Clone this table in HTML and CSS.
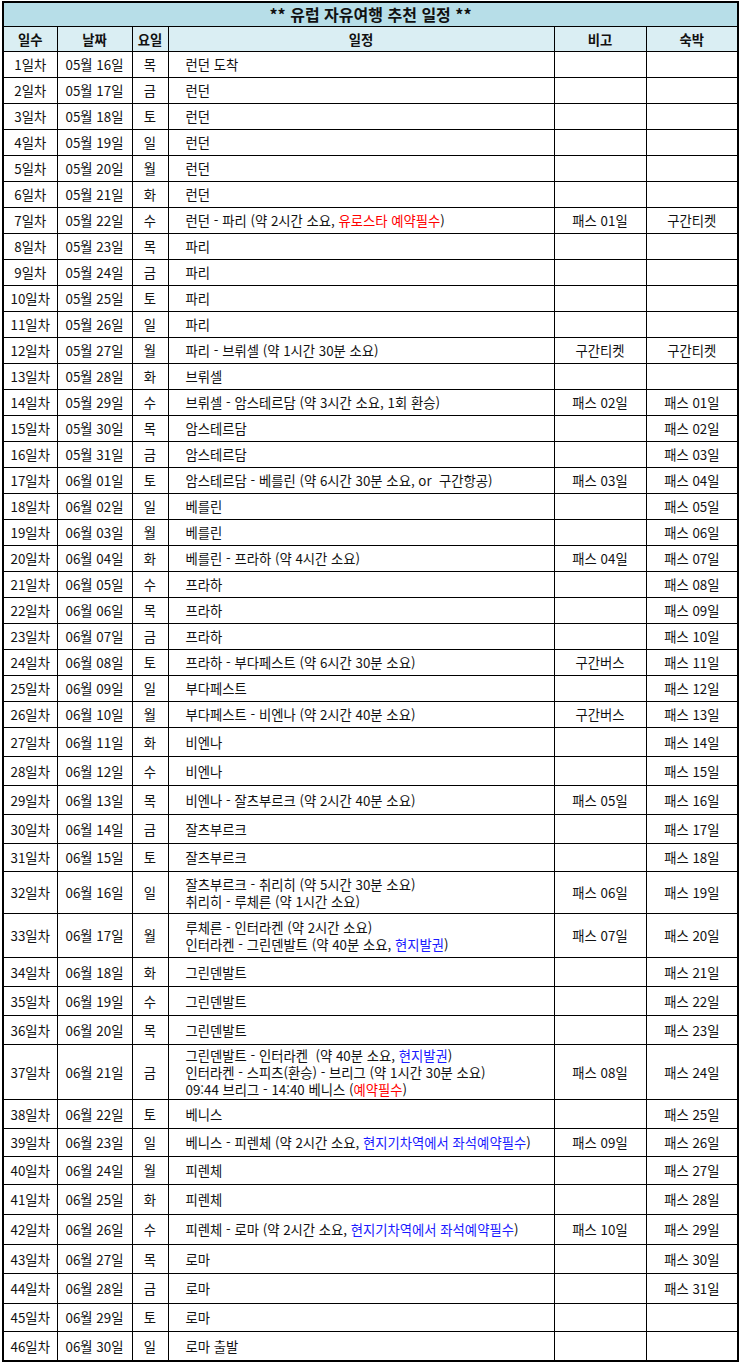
FILE: index.html
```html
<!DOCTYPE html>
<html lang="ko">
<head>
<meta charset="utf-8">
<title>유럽 자유여행 추천 일정</title>
<link rel="stylesheet" href="styles.css">
</head>
<body>
<div class="wrap">
<table class="plan">
<colgroup>
<col class="c-day"><col class="c-date"><col class="c-wd"><col class="c-plan"><col class="c-note"><col class="c-stay">
</colgroup>
<thead>
<tr class="title-row"><th colspan="6">** 유럽 자유여행 추천 일정 **</th></tr>
<tr class="head-row"><th>일수</th><th>날짜</th><th>요일</th><th>일정</th><th>비고</th><th>숙박</th></tr>
</thead>
<tbody>
<tr class="r26"><td>1일차</td><td>05월 16일</td><td>목</td><td class="plan-cell">런던 도착</td><td></td><td></td></tr>
<tr class="r26"><td>2일차</td><td>05월 17일</td><td>금</td><td class="plan-cell">런던</td><td></td><td></td></tr>
<tr class="r26"><td>3일차</td><td>05월 18일</td><td>토</td><td class="plan-cell">런던</td><td></td><td></td></tr>
<tr class="r26"><td>4일차</td><td>05월 19일</td><td>일</td><td class="plan-cell">런던</td><td></td><td></td></tr>
<tr class="r26"><td>5일차</td><td>05월 20일</td><td>월</td><td class="plan-cell">런던</td><td></td><td></td></tr>
<tr class="r26"><td>6일차</td><td>05월 21일</td><td>화</td><td class="plan-cell">런던</td><td></td><td></td></tr>
<tr class="r26"><td>7일차</td><td>05월 22일</td><td>수</td><td class="plan-cell">런던 - 파리 (약 2시간 소요, <span class="red">유로스타 예약필수</span>)</td><td>패스 01일</td><td>구간티켓</td></tr>
<tr class="r26"><td>8일차</td><td>05월 23일</td><td>목</td><td class="plan-cell">파리</td><td></td><td></td></tr>
<tr class="r26"><td>9일차</td><td>05월 24일</td><td>금</td><td class="plan-cell">파리</td><td></td><td></td></tr>
<tr class="r26"><td>10일차</td><td>05월 25일</td><td>토</td><td class="plan-cell">파리</td><td></td><td></td></tr>
<tr class="r26"><td>11일차</td><td>05월 26일</td><td>일</td><td class="plan-cell">파리</td><td></td><td></td></tr>
<tr class="r26"><td>12일차</td><td>05월 27일</td><td>월</td><td class="plan-cell">파리 - 브뤼셀 (약 1시간 30분 소요)</td><td>구간티켓</td><td>구간티켓</td></tr>
<tr class="r26"><td>13일차</td><td>05월 28일</td><td>화</td><td class="plan-cell">브뤼셀</td><td></td><td></td></tr>
<tr class="r26"><td>14일차</td><td>05월 29일</td><td>수</td><td class="plan-cell">브뤼셀 - 암스테르담 (약 3시간 소요, 1회 환승)</td><td>패스 02일</td><td>패스 01일</td></tr>
<tr class="r26"><td>15일차</td><td>05월 30일</td><td>목</td><td class="plan-cell">암스테르담</td><td></td><td>패스 02일</td></tr>
<tr class="r26"><td>16일차</td><td>05월 31일</td><td>금</td><td class="plan-cell">암스테르담</td><td></td><td>패스 03일</td></tr>
<tr class="r26"><td>17일차</td><td>06월 01일</td><td>토</td><td class="plan-cell">암스테르담 - 베를린 (약 6시간 30분 소요, or &nbsp;구간항공)</td><td>패스 03일</td><td>패스 04일</td></tr>
<tr class="r26"><td>18일차</td><td>06월 02일</td><td>일</td><td class="plan-cell">베를린</td><td></td><td>패스 05일</td></tr>
<tr class="r26"><td>19일차</td><td>06월 03일</td><td>월</td><td class="plan-cell">베를린</td><td></td><td>패스 06일</td></tr>
<tr class="r26"><td>20일차</td><td>06월 04일</td><td>화</td><td class="plan-cell">베를린 - 프라하 (약 4시간 소요)</td><td>패스 04일</td><td>패스 07일</td></tr>
<tr class="r26"><td>21일차</td><td>06월 05일</td><td>수</td><td class="plan-cell">프라하</td><td></td><td>패스 08일</td></tr>
<tr class="r26"><td>22일차</td><td>06월 06일</td><td>목</td><td class="plan-cell">프라하</td><td></td><td>패스 09일</td></tr>
<tr class="r26"><td>23일차</td><td>06월 07일</td><td>금</td><td class="plan-cell">프라하</td><td></td><td>패스 10일</td></tr>
<tr class="r26"><td>24일차</td><td>06월 08일</td><td>토</td><td class="plan-cell">프라하 - 부다페스트 (약 6시간 30분 소요)</td><td>구간버스</td><td>패스 11일</td></tr>
<tr class="r26"><td>25일차</td><td>06월 09일</td><td>일</td><td class="plan-cell">부다페스트</td><td></td><td>패스 12일</td></tr>
<tr class="r26"><td>26일차</td><td>06월 10일</td><td>월</td><td class="plan-cell">부다페스트 - 비엔나 (약 2시간 40분 소요)</td><td>구간버스</td><td>패스 13일</td></tr>
<tr class="r29"><td>27일차</td><td>06월 11일</td><td>화</td><td class="plan-cell">비엔나</td><td></td><td>패스 14일</td></tr>
<tr class="r29"><td>28일차</td><td>06월 12일</td><td>수</td><td class="plan-cell">비엔나</td><td></td><td>패스 15일</td></tr>
<tr class="r29"><td>29일차</td><td>06월 13일</td><td>목</td><td class="plan-cell">비엔나 - 잘츠부르크 (약 2시간 40분 소요)</td><td>패스 05일</td><td>패스 16일</td></tr>
<tr class="r29"><td>30일차</td><td>06월 14일</td><td>금</td><td class="plan-cell">잘츠부르크</td><td></td><td>패스 17일</td></tr>
<tr class="r28"><td>31일차</td><td>06월 15일</td><td>토</td><td class="plan-cell">잘츠부르크</td><td></td><td>패스 18일</td></tr>
<tr class="r41"><td>32일차</td><td>06월 16일</td><td>일</td><td class="plan-cell">잘츠부르크 - 취리히 (약 5시간 30분 소요)<br>취리히 - 루체른 (약 1시간 소요)</td><td>패스 06일</td><td>패스 19일</td></tr>
<tr class="r43"><td>33일차</td><td>06월 17일</td><td>월</td><td class="plan-cell">루체른 - 인터라켄 (약 2시간 소요)<br>인터라켄 - 그린덴발트 (약 40분 소요, <span class="blue">현지발권</span>)</td><td>패스 07일</td><td>패스 20일</td></tr>
<tr class="r29"><td>34일차</td><td>06월 18일</td><td>화</td><td class="plan-cell">그린덴발트</td><td></td><td>패스 21일</td></tr>
<tr class="r29"><td>35일차</td><td>06월 19일</td><td>수</td><td class="plan-cell">그린덴발트</td><td></td><td>패스 22일</td></tr>
<tr class="r29"><td>36일차</td><td>06월 20일</td><td>목</td><td class="plan-cell">그린덴발트</td><td></td><td>패스 23일</td></tr>
<tr class="r54"><td>37일차</td><td>06월 21일</td><td>금</td><td class="plan-cell">그린덴발트 - 인터라켄 &nbsp;(약 40분 소요, <span class="blue">현지발권</span>)<br>인터라켄 - 스피츠(환승) - 브리그 (약 1시간 30분 소요)<br>09:44 브리그 - 14:40 베니스 (<span class="red">예약필수</span>)</td><td>패스 08일</td><td>패스 24일</td></tr>
<tr class="r29"><td>38일차</td><td>06월 22일</td><td>토</td><td class="plan-cell">베니스</td><td></td><td>패스 25일</td></tr>
<tr class="r28"><td>39일차</td><td>06월 23일</td><td>일</td><td class="plan-cell">베니스 - 피렌체 (약 2시간 소요, <span class="blue">현지기차역에서 좌석예약필수</span>)</td><td>패스 09일</td><td>패스 26일</td></tr>
<tr class="r28"><td>40일차</td><td>06월 24일</td><td>월</td><td class="plan-cell">피렌체</td><td></td><td>패스 27일</td></tr>
<tr class="r30"><td>41일차</td><td>06월 25일</td><td>화</td><td class="plan-cell">피렌체</td><td></td><td>패스 28일</td></tr>
<tr class="r30"><td>42일차</td><td>06월 26일</td><td>수</td><td class="plan-cell">피렌체 - 로마 (약 2시간 소요, <span class="blue">현지기차역에서 좌석예약필수</span>)</td><td>패스 10일</td><td>패스 29일</td></tr>
<tr class="r29"><td>43일차</td><td>06월 27일</td><td>목</td><td class="plan-cell">로마</td><td></td><td>패스 30일</td></tr>
<tr class="r30"><td>44일차</td><td>06월 28일</td><td>금</td><td class="plan-cell">로마</td><td></td><td>패스 31일</td></tr>
<tr class="r28"><td>45일차</td><td>06월 29일</td><td>토</td><td class="plan-cell">로마</td><td></td><td></td></tr>
<tr class="r29"><td>46일차</td><td>06월 30일</td><td>일</td><td class="plan-cell">로마 출발</td><td></td><td></td></tr>
</tbody>
</table>
</div>
</body>
</html>
```
FILE: styles.css
```css
html, body {
  margin: 0;
  padding: 0;
  background: #ffffff;
}
.wrap {
  padding: 1px 0 0 2px;
}
.plan {
  border-collapse: collapse;
  table-layout: fixed;
  width: 735px;
  border: 2px solid #000;
  font-family: "Noto Sans CJK KR", "Noto Sans", sans-serif;
  font-size: 13.33px;
  line-height: 17px;
  color: #111;
}
.c-day { width: 54px; }
.c-date { width: 75px; }
.c-wd { width: 36px; }
.c-plan { width: 386px; }
.c-note { width: 92px; }
.c-stay { width: 92px; }
.plan th, .plan td {
  border: 1px solid #000;
  padding: 0;
  text-align: center;
  vertical-align: middle;
  white-space: nowrap;
  overflow: hidden;
}
.title-row th {
  background: #b7dee8;
  height: 23px;
  font-size: 16px;
  font-weight: bold;
}
.head-row th {
  background: #daeef3;
  height: 24px;
  font-weight: bold;
}
.plan td.plan-cell {
  text-align: left;
  padding-left: 17px;
}
.r26 td { height: 25px; }
.r28 td { height: 27px; }
.r29 td { height: 28px; }
.r30 td { height: 29px; }
.r41 td { height: 41px; }
.r43 td { height: 43px; }
.r54 td { height: 54px; }
.red { color: #ff0000; }
.blue { color: #1a1aff; }
```
